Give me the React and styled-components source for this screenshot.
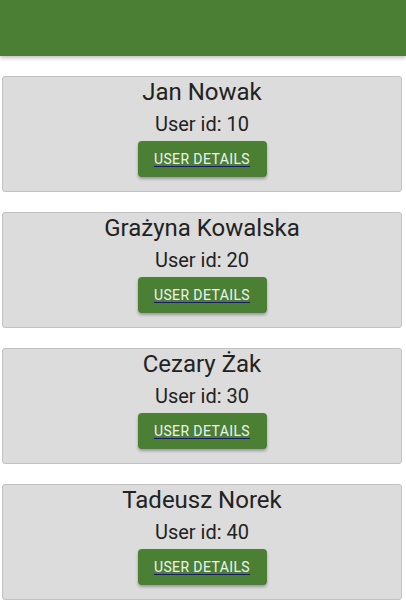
import React from "react";
import styled, { createGlobalStyle } from "styled-components";

const GlobalStyle = createGlobalStyle`
  body {
    margin: 0;
    background: #ffffff;
    font-family: Roboto, "Liberation Sans", sans-serif;
  }
`;

const Header = styled.header`
  height: 56px;
  background-color: #4a7f34;
  box-shadow: 0 2px 4px rgba(0, 0, 0, 0.25);
`;

const List = styled.main`
  display: flex;
  flex-direction: column;
  gap: 20px;
  padding: 20px 4px 0 2px;
`;

const Card = styled.div`
  display: flex;
  flex-direction: column;
  align-items: center;
  padding: 1px 0 14px 0;
  background-color: #dcdcdc;
  border: 1px solid #c2c2c2;
  border-radius: 3px;
  color: #222222;
`;

const Name = styled.div`
  font-size: 24px;
  line-height: 28px;
`;

const UserId = styled.div`
  margin-top: 6px;
  font-size: 20px;
  line-height: 24px;
`;

const DetailsButton = styled.button`
  margin-top: 5px;
  width: 129px;
  height: 36px;
  border: none;
  border-radius: 4px;
  background-color: #4a7f34;
  color: #eef6ee;
  font-family: Roboto, "Liberation Sans", sans-serif;
  font-size: 14px;
  letter-spacing: 0.4px;
  text-transform: uppercase;
  text-decoration: underline;
  text-decoration-color: #1c1a6e;
  text-underline-offset: 2px;
  box-shadow: 0 2px 3px rgba(0, 0, 0, 0.3);
  cursor: pointer;
`;

const users = [
  { id: 10, name: "Jan Nowak" },
  { id: 20, name: "Grażyna Kowalska" },
  { id: 30, name: "Cezary Żak" },
  { id: 40, name: "Tadeusz Norek" },
];

function UserCard({ name, id }) {
  return (
    <Card>
      <Name>{name}</Name>
      <UserId>User id: {id}</UserId>
      <DetailsButton type="button">User details</DetailsButton>
    </Card>
  );
}

export default function App() {
  return (
    <>
      <GlobalStyle />
      <Header />
      <List>
        {users.map((user) => (
          <UserCard key={user.id} name={user.name} id={user.id} />
        ))}
      </List>
    </>
  );
}
